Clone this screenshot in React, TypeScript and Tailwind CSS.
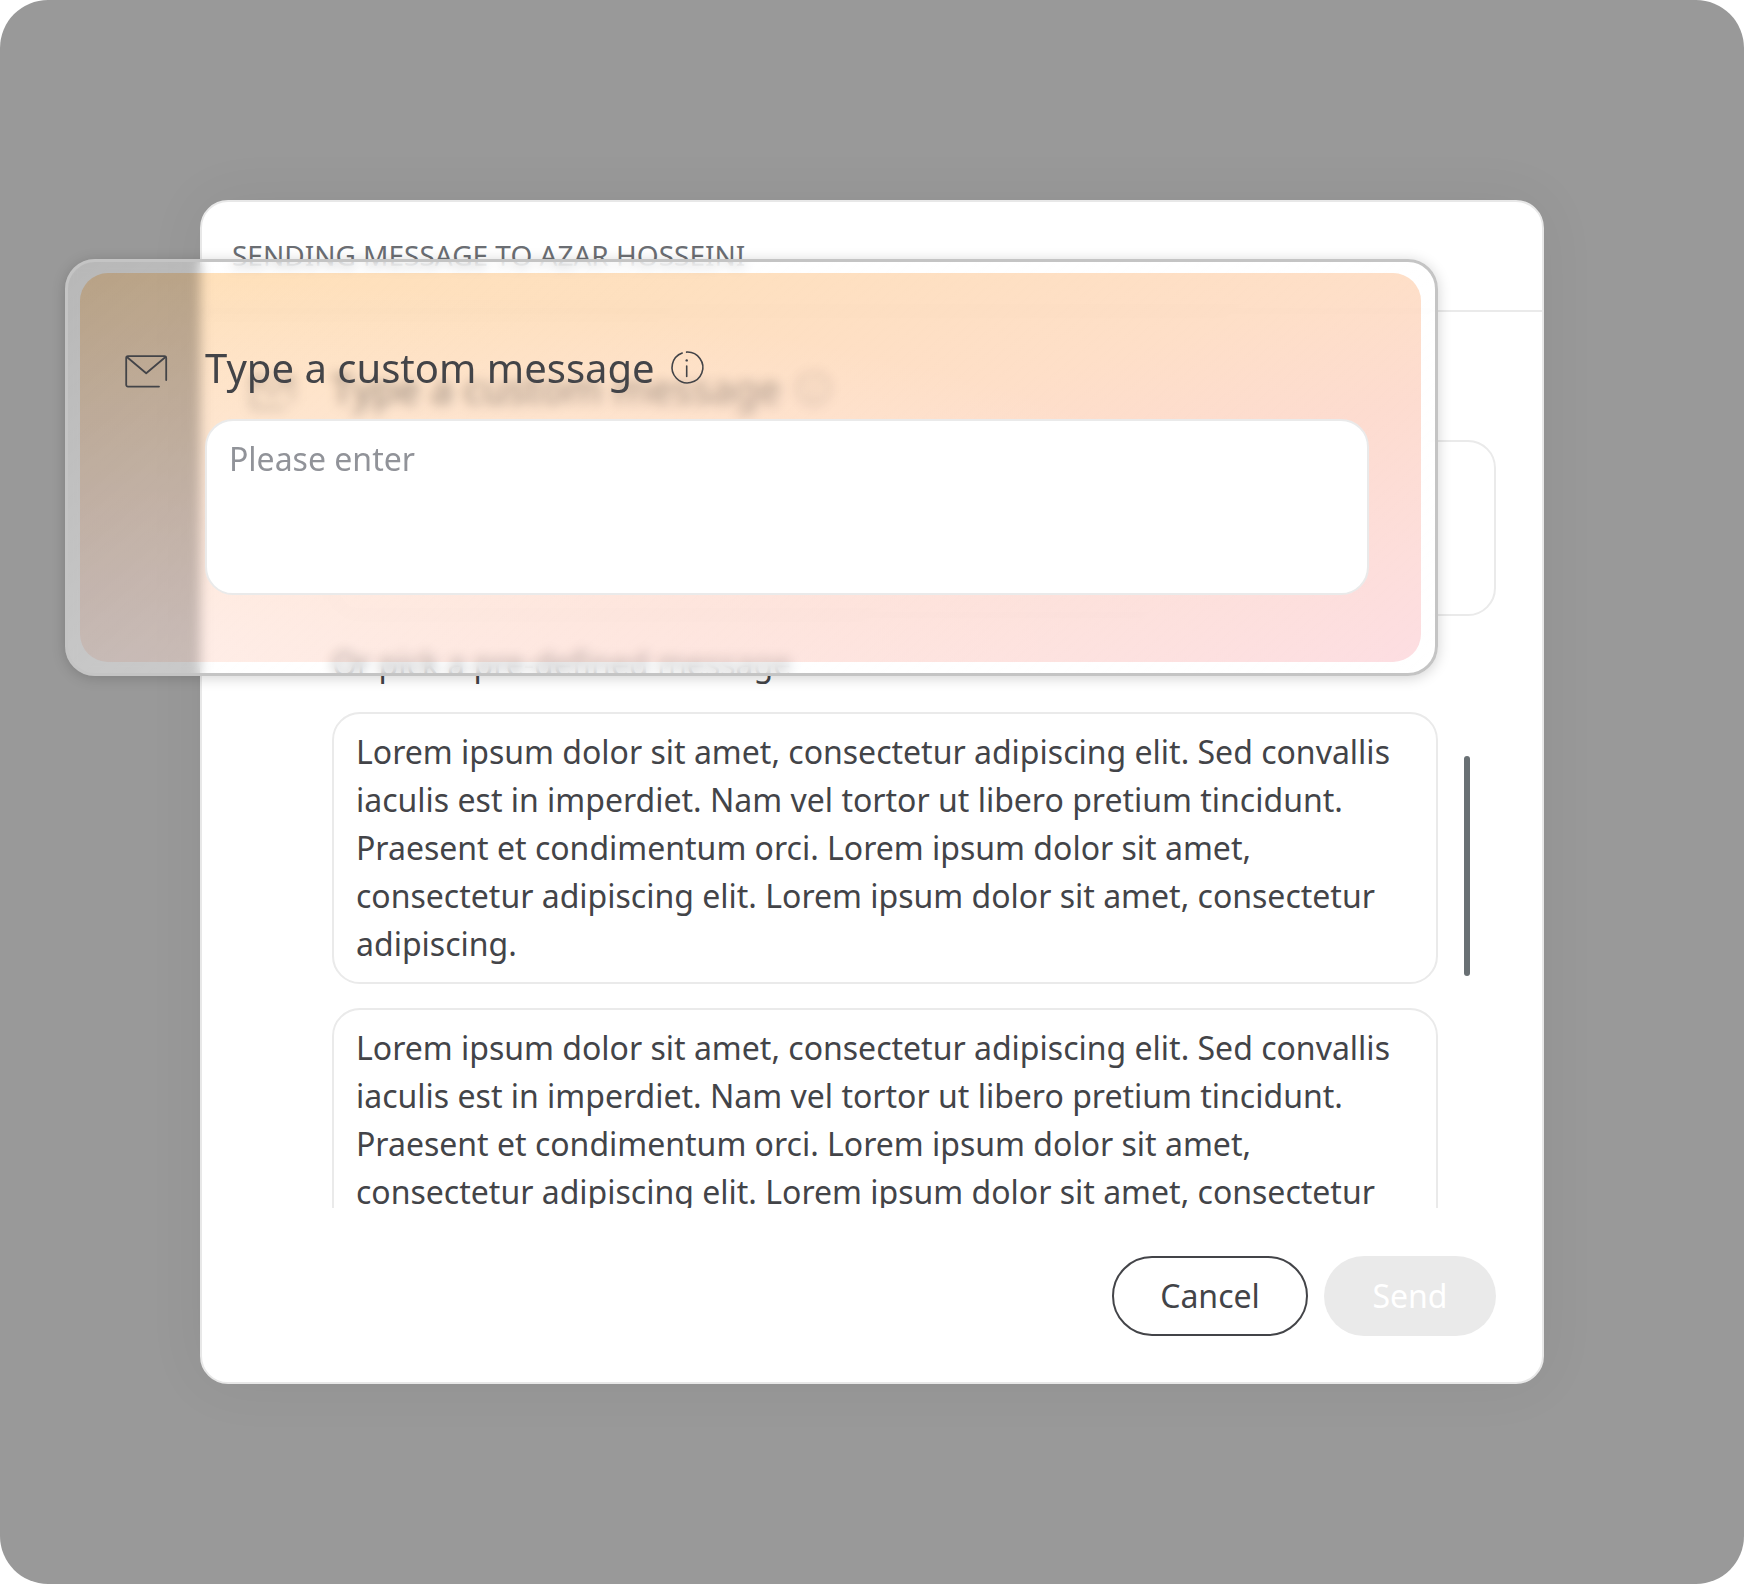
import { useId } from "react";

const SAMPLE =
  "Lorem ipsum dolor sit amet, consectetur adipiscing elit. Sed convallis iaculis est in imperdiet. Nam vel tortor ut libero pretium tincidunt. Praesent et condimentum orci. Lorem ipsum dolor sit amet, consectetur adipiscing elit. Lorem ipsum dolor sit amet, consectetur adipiscing.";

function MailIcon() {
  return (
    <svg
      className="mt-1 size-12 shrink-0"
      viewBox="0 0 48 48"
      fill="none"
      stroke="currentColor"
      strokeWidth="1.8"
      strokeLinecap="round"
      strokeLinejoin="round"
      aria-hidden="true"
    >
      <path d="M44.200 37V15a1.800 1.800 0 0 0-1.800-1.800H6A1.800 1.800 0 0 0 4.200 15v26.800a1.800 1.800 0 0 0 1.800 1.800H37" />
      <path d="M5.200 14.200 24.200 30.200 43.200 14.200" />
    </svg>
  );
}

function InfoIcon() {
  return (
    <svg
      className="size-10"
      viewBox="0 0 40 40"
      fill="none"
      stroke="currentColor"
      strokeWidth="1.6"
      strokeLinecap="round"
      aria-hidden="true"
    >
      <path d="M19.600 5.100A15.400 15.400 0 1 1 15.200 6" />
      <path d="M19.700 19v10.500" />
      <circle cx="19.700" cy="13.400" r="1.200" fill="currentColor" stroke="none" />
    </svg>
  );
}

function CustomMessageField() {
  const id = useId();
  return (
    <div className="flex gap-[35px]">
      <MailIcon />
      <div className="flex min-w-0 grow flex-col gap-[22px]">
        <div className="flex items-start gap-3">
          <label htmlFor={id} className="text-[40px] leading-[58px]">
            Type a custom message
          </label>
          <button type="button" aria-label="More information" className="mt-2 shrink-0">
            <InfoIcon />
          </button>
        </div>
        <textarea
          id={id}
          placeholder="Please enter"
          className="block h-44 w-full resize-none rounded-[28px] border-2 border-[#eaeaea] bg-white px-[22px] py-[14px] text-[32px] leading-[48px] outline-none placeholder:text-[#919399]"
        />
      </div>
    </div>
  );
}

export default function App() {
  return (
    <div className="min-h-screen bg-white font-['Noto_Sans',sans-serif] text-[#434448]">
      <main className="flex min-h-screen flex-col justify-center rounded-[48px] bg-[#999999] p-[200px]">
        <div className="relative">
          <section
            role="dialog"
            aria-labelledby="dialog-title"
            className="rounded-[28px] border-2 border-[#e8e8e8] bg-white shadow-[0_0_60px_rgba(0,0,0,0.06)]"
          >
            <header className="border-b-2 border-[#eaeaea] px-[30px] pt-[33px] pb-[35px]">
              <h1 id="dialog-title" className="text-[28px] leading-10 text-[#6b6e73] uppercase">
                Sending message to Azar Hosseini
              </h1>
            </header>

            <div className="px-[46px] pt-12 pb-[46px]">
              <CustomMessageField />

              <div className="mt-6 flex flex-col gap-6 pl-[84px]">
                <h2 className="text-[32px] leading-[48px]">Or pick a pre-defined message</h2>
                <div className="flex gap-[26px] pr-[26px]">
                  <div className="flex h-[496px] min-w-0 grow flex-col gap-6 overflow-hidden">
                    {[0, 1].map((n) => (
                      <button
                        key={n}
                        type="button"
                        className="shrink-0 rounded-[28px] border-2 border-[#eaeaea] px-[22px] py-[14px] text-left text-[32px] leading-[48px]"
                      >
                        {SAMPLE}
                      </button>
                    ))}
                  </div>
                  <div className="mt-11 h-[220px] w-[6px] shrink-0 rounded-full bg-[#697074]" />
                </div>
              </div>

              <footer className="mt-12 flex justify-end gap-4 text-[32px] leading-[48px]">
                <button type="button" className="h-20 w-[196px] rounded-full border-2 border-[#434448]">
                  Cancel
                </button>
                <button type="button" disabled className="h-20 w-[172px] rounded-full bg-[#eaeaea] text-white">
                  Send
                </button>
              </footer>
            </div>
          </section>

          {/* Lifted copy of the field, floating over the dialog */}
          <div className="absolute top-[59px] right-[106px] left-[-135px]">
            <div className="absolute inset-0 rounded-[30px] border-[3px] border-[#c4c4c4] bg-[linear-gradient(140deg,rgba(255,255,255,0.3),rgba(255,255,255,0.86))] shadow-[0_2px_14px_rgba(0,0,0,0.18)] backdrop-blur-[6px]" />
            <div className="absolute top-[14px] right-[17px] bottom-[14px] left-[15px] rounded-[28px] bg-[radial-gradient(ellipse_at_bottom_left,rgba(255,240,236,0.9),rgba(255,236,228,0)_70%),linear-gradient(165deg,#ffe1ba,#fee0c0_25%,#fedfc8_48%,#fddcd0_65%,#fddedb_85%,#fddee2)] mix-blend-multiply" />
            <div className="relative pt-20 pr-[69px] pb-[81px] pl-[57px]">
              <CustomMessageField />
            </div>
          </div>
        </div>
      </main>
    </div>
  );
}
